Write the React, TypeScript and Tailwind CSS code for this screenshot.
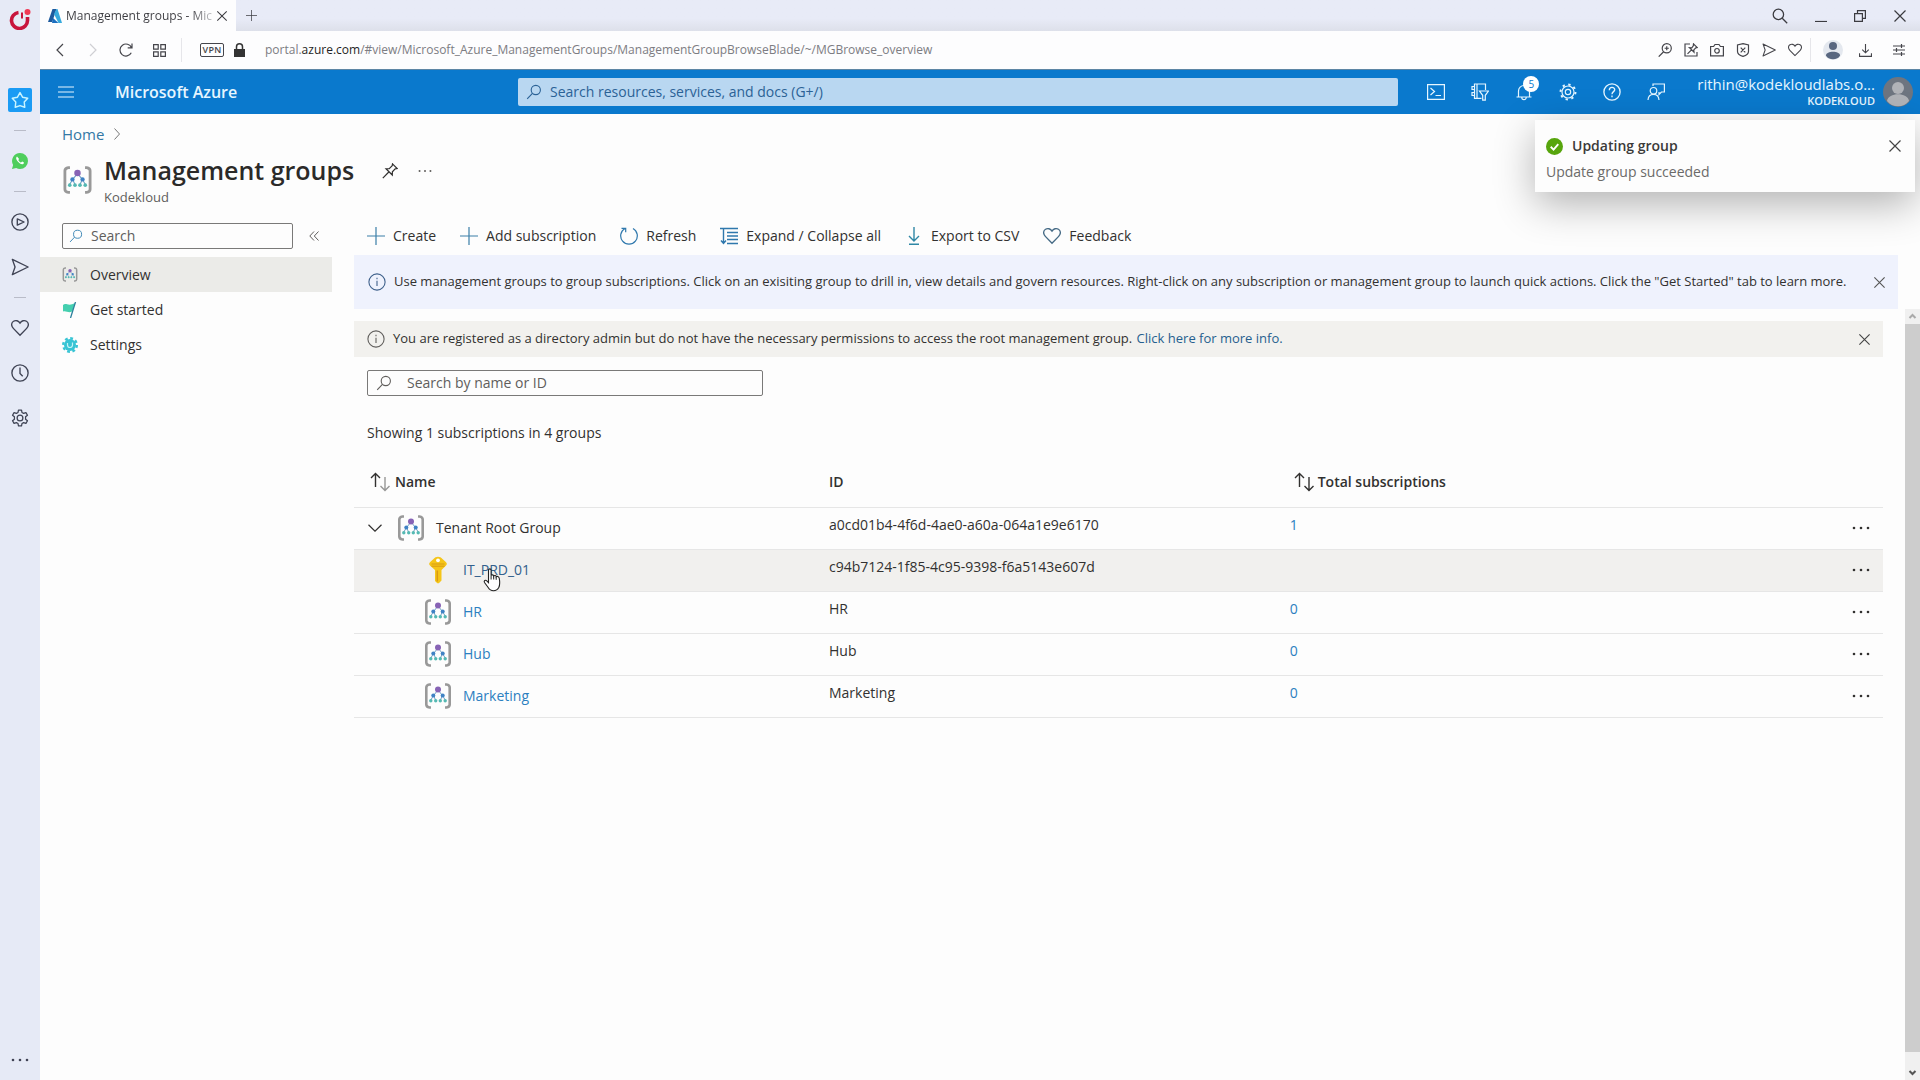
import React from 'react';
import clsx from 'clsx';

interface IconProps {
    className?: string;
}

interface GroupRow {
    name: string;
    id: string;
    total?: number;
    kind: 'root' | 'subscription' | 'group';
}

const rows: GroupRow[] = [
    { name: 'Tenant Root Group', id: 'a0cd01b4-4f6d-4ae0-a60a-064a1e9e6170', total: 1, kind: 'root' },
    { name: 'IT_PRD_01', id: 'c94b7124-1f85-4c95-9398-f6a5143e607d', kind: 'subscription' },
    { name: 'HR', id: 'HR', total: 0, kind: 'group' },
    { name: 'Hub', id: 'Hub', total: 0, kind: 'group' },
    { name: 'Marketing', id: 'Marketing', total: 0, kind: 'group' },
];

const Line = ({ className, children, box = '0 0 20 20', width = 1.2 }: IconProps & { children: React.ReactNode; box?: string; width?: number }) => (
    <svg viewBox={box} className={clsx('shrink-0', className)} fill="none" stroke="currentColor" strokeWidth={width} aria-hidden="true">
        {children}
    </svg>
);

const Close = ({ className }: IconProps) => (
    <Line className={className} box="0 0 14 14"><path d="M1.5 1.5l11 11M12.5 1.5l-11 11" /></Line>
);

const Search = ({ className }: IconProps) => (
    <Line className={className} box="0 0 16 16" width={1.1}><circle cx="9.8" cy="6" r="4.6" /><path d="M6.4 9.3L1.2 14.8" /></Line>
);

const Plus = ({ className }: IconProps) => (
    <Line className={className} box="0 0 18 18"><path d="M9 0v18M0 9h18" /></Line>
);

const Heart = ({ className }: IconProps) => (
    <Line className={className} width={1.5}><path d="M10 18L2.600 10.400C-.2 7.400.3 4 2.800 2.500c2.400-1.500 5.600-.6 7.200 2 1.600-2.600 4.800-3.500 7.200-2 2.500 1.500 3 4.900.2 7.900z" /></Line>
);

const Send = ({ className }: IconProps) => (
    <Line className={className} width={1.5}><path d="M1.500 1.500L19 10 1.500 18.500 4.500 10z" strokeLinejoin="round" /></Line>
);

const Info = ({ className }: IconProps) => (
    <Line className={className}><circle cx="10" cy="10" r="9" /><path d="M10 8.500v6M10 5.200v1.700" /></Line>
);

const Gear = ({ className }: IconProps) => (
    <Line className={className} width={1.4}>
        <circle cx="10" cy="10" r="3.200" />
        <path strokeLinejoin="round" d="M8.300 1.200h3.400l.5 2.700 1.800 1.000 2.600-.9 1.700 2.900-2.100 1.800v2.600l2.100 1.800-1.700 2.900-2.600-.9-1.800 1-.5 2.700H8.300l-.5-2.700-1.800-1-2.600.9-1.700-2.900 2.100-1.800V8.700L1.700 6.900 3.400 4l2.600.9 1.800-1z" />
    </Line>
);

// portal settings gear, with narrow teeth
const CogIcon = ({ className }: IconProps) => (
    <Line className={className} width={1.3}>
        <circle cx="10" cy="10" r="3" />
        <circle cx="10" cy="10" r="6.700" />
        <circle cx="10" cy="10" r="8.300" strokeWidth="2.200" strokeDasharray="2.600 3.919" />
    </Line>
);

const Dots = ({ className }: IconProps) => (
    <svg viewBox="0 0 18 4" className={className} fill="currentColor" aria-hidden="true">
        <circle cx="2" cy="2" r="1.300" /><circle cx="9" cy="2" r="1.300" /><circle cx="16" cy="2" r="1.300" />
    </svg>
);

const GroupIcon = ({ className }: IconProps) => (
    <svg viewBox="0 0 28 26" className={clsx('shrink-0', className)} fill="none" aria-hidden="true">
        <path d="M7 1.500H5.500Q2.300 2 2.300 4.500v17Q2.300 24 5.500 24.500H7M21 1.500h1.500q3.200.5 3.200 3v17q0 2.500-3.200 3H21" stroke="#999" strokeWidth="2.600" />
        <path d="M14 7L9.500 12.500M14 7l4.500 5.500M9.500 12.500l-3 5M9.500 12.500l2.300 5M18.500 12.500l-2.300 5M18.500 12.500l3 5" stroke="#6f9fc4" strokeWidth="1" />
        <circle cx="14" cy="6.500" r="3" fill="#8763b5" />
        <circle cx="9.300" cy="12.500" r="2" fill="#3f82c4" />
        <circle cx="18.700" cy="12.500" r="2" fill="#3f82c4" />
        <g fill="#55b9b3">
            <circle cx="6.800" cy="17.800" r="1.700" /><circle cx="11.700" cy="17.800" r="1.700" />
            <circle cx="16.300" cy="17.800" r="1.700" /><circle cx="21.200" cy="17.800" r="1.700" />
        </g>
    </svg>
);

const KeyIcon = () => (
    <svg viewBox="0 0 20 28" className="h-7 w-5 shrink-0" aria-hidden="true">
        <path d="M10 .8c2 0 3 .9 4.500 2.200l3.300 3c1.400 1.300 1.400 2.500 0 3.800L13.500 14v10.500L10.800 27.300H9.300L7 25V14L2.200 9.800C.8 8.500.8 7.300 2.200 6l3.300-3C7 1.700 8 .8 10 .8z" fill="#f5c518" />
        <path d="M3.500 8h13M3.500 10.200h13" stroke="#d99a12" strokeWidth="1" />
        <path d="M9.300 14.500v11" stroke="#d99a12" strokeWidth="1.500" />
        <circle cx="10" cy="4.300" r="1.900" fill="#fff" />
    </svg>
);

const SortIcon = ({ dim }: { dim?: boolean }) => (
    <svg viewBox="0 0 20 20" className="h-5 w-5 shrink-0" fill="none" stroke="#323130" strokeWidth="1.400" aria-hidden="true">
        <path d="M5.500 15V1.500M1 6l4.500-4.500L10 6" />
        <path d="M15 5v13.500M10.500 14l4.500 4.500 4.500-4.500" opacity={dim ? 0.5 : 1} />
    </svg>
);

const HandCursor = () => (
    <svg viewBox="0 0 18 24" className="pointer-events-none absolute top-2 left-5 h-6 w-[18px]" aria-hidden="true">
        <path d="M5.500 2.200c0-1.800 2.600-1.800 2.600 0v5.300c.5-1 2.500-.8 2.600.6.600-1 2.400-.7 2.500.7.700-.8 2.600-.6 3 1.200.7 3.600.9 6.500-.3 9.300-1.400 2.600-3.200 3.500-5.400 3.500-3 0-4.300-1.500-5.500-3.500L1.500 14.500c-1-1.700.9-3 2.300-1.600l1.700 1.800z" fill="#fff" stroke="#222" strokeWidth="1.100" />
        <path d="M8.100 7.500v4M10.700 8.500v3M13.200 9.200v2.600" stroke="#222" strokeWidth="1" />
    </svg>
);

const SideRail = () => (
    <aside className="flex w-10 shrink-0 flex-col items-center bg-[#e6eaf6] text-[#3f4354]">
        <svg viewBox="0 0 22 22" className="mt-2 h-[22px] w-[22px]" fill="none" aria-hidden="true">
            <path d="M9.500 4.500A8 8 0 1 0 18.500 12.500V9" stroke="#c8143c" strokeWidth="3.600" />
            <path d="M13 4.500v6" stroke="#c8143c" strokeWidth="2" />
            <circle cx="18.500" cy="4" r="3" fill="#f03a55" />
        </svg>
        <button aria-label="Start page" className="mt-[58px] flex h-6 w-6 items-center justify-center rounded-xs bg-[#1a9bf4] text-[#c9f4ff]">
            <Line className="h-[18px] w-[18px]" width={1.6}><path strokeLinejoin="round" d="M10 1.800l2.800 5.100 5.800 1.100-3.900 4.300.6 5.800-5.300-1.900-5.300 1.900.6-5.800L1.400 8l5.800-1.100z" /></Line>
        </button>
        <hr className="mt-[18px] w-3 border-[#b9bcc8]" />
        <button aria-label="WhatsApp" className="mt-[22px] h-4 w-4">
            <svg viewBox="0 0 16 16" aria-hidden="true">
                <path d="M8 0a8 8 0 0 1 0 16c-1.400 0-2.700-.3-3.800-1L0 16l1.100-4A8 8 0 0 1 8 0z" fill="#4fce5d" />
                <path d="M5 3.600c-1.400 1-1 3 .8 5s3.900 3.200 5.300 2.400c1.200-.7.900-1.400.5-1.700l-1.400-.7-1.200.9C7.800 9.200 6.700 8 6.300 6.900l.8-1z" fill="#fff" />
            </svg>
        </button>
        <hr className="mt-[22px] w-3 border-[#b9bcc8]" />
        <button aria-label="Player" className="mt-[21px]">
            <Line className="h-[18px] w-[18px]" width={1.500}><circle cx="10" cy="10" r="9" /><path strokeLinejoin="round" d="M7 6.500l7.500 3.500L7 13.500z" /></Line>
        </button>
        <button aria-label="My Flow" className="mt-[27px]"><Send className="h-[18px] w-[18px]" /></button>
        <hr className="mt-[21px] w-3 border-[#b9bcc8]" />
        <button aria-label="Bookmarks" className="mt-[21px]"><Heart className="h-[18px] w-[18px]" /></button>
        <button aria-label="History" className="mt-[27px]">
            <Line className="h-[18px] w-[18px]" width={1.500}><circle cx="10" cy="10" r="9" /><path d="M10 4v6.500l3 3" /></Line>
        </button>
        <button aria-label="Settings" className="mt-[27px]"><Gear className="h-[18px] w-[18px]" /></button>
        <button aria-label="More" className="mt-auto mb-[18px]"><Dots className="h-[4px] w-[18px]" /></button>
    </aside>
);

const TabStrip = () => (
    <div className="flex h-[31px] items-stretch bg-linear-to-b from-[#e8ebf7] from-60% to-[#dde0ea] text-[#3b3b40]">
        <div className="flex w-[196px] items-center bg-[#fdfdfe] pl-2">
            <svg viewBox="0 0 14 14" className="h-[14px] w-[14px]" aria-hidden="true">
                <path d="M4.500 0h4L4.200 13H0z" fill="#1d5a9e" />
                <path d="M5 9l5.500 5L4 14z" fill="#1c6fc0" />
                <path d="M8.500 0h1L14 14h-3.500L6 5z" fill="#36a9dc" />
            </svg>
            <span className="ml-1 w-[146px] bg-linear-to-r from-[#3b3b40] from-85% to-[#c9c9cc] bg-clip-text text-xs leading-5 whitespace-nowrap text-transparent">
                Management groups - Mic
            </span>
            <button aria-label="Close tab" className="ml-1"><Close className="h-3 w-3" /></button>
        </div>
        <button aria-label="New tab" className="ml-[10px] text-[#3b3b40]"><Plus className="h-[11px] w-[11px]" /></button>
        <div className="ml-auto flex items-center gap-[27px] pr-[13px]">
            <button aria-label="Search tabs">
                <Line className="h-4 w-4" width={1.600}><circle cx="8" cy="8" r="6.500" /><path d="M12.800 12.800L19 19" /></Line>
            </button>
            <button aria-label="Minimize"><Line className="h-3 w-3" box="0 0 12 12"><path d="M0 11.500h12" /></Line></button>
            <button aria-label="Restore"><Line className="h-3 w-3" box="0 0 12 12"><path d="M.6 3.600h7.800v7.800H.6zM3.500 3.500V.6h7.900v7.800H8.500" /></Line></button>
            <button aria-label="Close window"><Close className="h-[14px] w-[14px]" /></button>
        </div>
    </div>
);

const AddressBar = () => (
    <div className="flex h-[39px] items-center border-b border-[#5d86a5] bg-[#fdfdfe] pr-[15px] pl-4 text-[#45454b]">
        <button aria-label="Back"><Line className="h-[14px] w-2" box="0 0 8 14"><path d="M7 1L1 7l6 6" /></Line></button>
        <button aria-label="Forward" className="ml-[25px] text-[#cfcfd4]"><Line className="h-[14px] w-2" box="0 0 8 14"><path d="M1 1l6 6-6 6" /></Line></button>
        <button aria-label="Reload" className="ml-[22px]">
            <Line className="h-[14px] w-[14px]" box="0 0 14 14"><path d="M12.300 9.800A6 6 0 1 1 12.500 4.700M13 .5v4.300H8.700" /></Line>
        </button>
        <button aria-label="Speed dial" className="ml-5">
            <Line className="h-[13px] w-[13px]" box="0 0 13 13"><path d="M.6.6h4.600v4.600H.6zM7.800.6h4.600v4.600H7.800zM.6 7.800h4.600v4.600H.6zM7.800 7.800h4.600v4.600H7.800z" /></Line>
        </button>
        <span className="ml-[15px] h-6 w-px bg-[#e6e6ea]" />
        <button className="ml-[18px] h-[14px] w-6 rounded-xs border border-[#45454b] text-[9px] leading-3 font-semibold tracking-wide">VPN</button>
        <svg viewBox="0 0 11 14" className="ml-[10px] h-[14px] w-[11px]" aria-hidden="true">
            <path d="M0 6h11v8H0z" fill="#333" /><path d="M2.500 6V3.800a3 3 0 0 1 6 0V6" fill="none" stroke="#333" strokeWidth="1.500" />
        </svg>
        <div className="ml-5 flex-1 text-xs leading-5 text-[#7c7c82]">
            portal.<span className="text-[#1f1f24]">azure.com</span>/#view/Microsoft_Azure_ManagementGroups/ManagementGroupBrowseBlade/~/MGBrowse_overview
        </div>
        <div className="flex items-center gap-3">
            <button aria-label="Zoom">
                <Line className="h-[14px] w-[14px]" width={1.700}><circle cx="12.500" cy="7.500" r="6.500" /><path d="M8 12.500L1 19.500M9.500 7.500h6M12.500 4.500v6" /></Line>
            </button>
            <button aria-label="Pin page">
                <Line className="h-[14px] w-[14px]" box="0 0 14 14"><path d="M6 1H1v12h12V9M9.500.8l3.800 3.800-1.500.3-2 2 .2 2.300L5.500 4.700l2.300.2 1.500-2zM7.500 6.800L3.500 10.800" /></Line>
            </button>
            <button aria-label="Snapshot">
                <Line className="h-[14px] w-[14px]" box="0 0 14 14"><path d="M.6 3.500h3l1.400-2h4l1.400 2h3v9.300H.6z" /><circle cx="7" cy="7.800" r="2.300" /></Line>
            </button>
            <button aria-label="Ad blocker">
                <Line className="h-[14px] w-[14px]" box="0 0 14 14"><path d="M7 .7l5.500 1.300v6.500c0 2.300-2.500 4-5.500 4.900-3-.9-5.500-2.600-5.500-4.900V2zM4.700 4.700l4.600 4.600M9.300 4.700L4.700 9.300" /></Line>
            </button>
            <button aria-label="Send page"><Send className="h-[14px] w-[14px]" /></button>
            <button aria-label="Add bookmark"><Heart className="h-[14px] w-[14px]" /></button>
        </div>
        <span className="ml-2 h-6 w-px bg-[#e6e6ea]" />
        <button aria-label="Profile" className="ml-3">
            <svg viewBox="0 0 20 20" className="h-5 w-5" aria-hidden="true">
                <circle cx="10" cy="10" r="10" fill="#e4e8ef" /><circle cx="10" cy="6" r="4" fill="#596780" />
                <path d="M3 15.500c0-5 14-5 14 0-2 5-12 5-14 0z" fill="#596780" />
            </svg>
        </button>
        <button aria-label="Downloads" className="ml-4">
            <Line className="h-[13px] w-[13px]" box="0 0 14 14"><path d="M7 0v9.500M3.500 6L7 9.500 10.500 6M.6 10v3.300h12.800V10" /></Line>
        </button>
        <button aria-label="Easy setup" className="ml-[21px]">
            <Line className="h-3 w-3" box="0 0 12 12"><path d="M0 2h12M0 6h12M0 10h12M8.500 0v4M3.500 4v4M8.500 8v4" /></Line>
        </button>
    </div>
);

const AzureBar = () => (
    <header className="flex h-11 items-center bg-[#0a79cd] text-[#e6f6ff]">
        <button aria-label="Show portal menu" className="ml-[18px]">
            <Line className="h-3 w-4" box="0 0 16 12"><path d="M0 1h16M0 6h16M0 11h16" /></Line>
        </button>
        <a href="#home" className="ml-[41px] w-[240px] text-base leading-6 font-semibold">Microsoft Azure</a>
        <label className="ml-[163px] flex h-7 flex-1 items-center gap-2 rounded-xs bg-[#b9d7f1] pl-2 text-[#2b6296]">
            <Search className="h-4 w-4" />
            <input aria-label="Search resources" placeholder="Search resources, services, and docs (G+/)" className="w-full bg-transparent text-sm outline-none placeholder:text-[#2b6296]" />
        </label>
        <div className="ml-[29px] flex items-center gap-[26px]">
            <button aria-label="Cloud Shell">
                <Line className="h-[18px] w-[18px]" box="0 0 18 18"><path d="M.6 1.600h16.800v14.800H.6zM3.500 5l4 3.500-4 3.500M8.500 12.500H14" /></Line>
            </button>
            <button aria-label="Directories and subscriptions">
                <Line className="h-[18px] w-[18px]" box="0 0 18 18"><path d="M10.500 15.400h-7V1h11v6M6 1v14.400M3.500 3.500H1v3h2.500M3.500 9.500H1v3h2.500M8.500 8h9l-3.200 4.300v4.900h-2.600v-4.900z" /></Line>
            </button>
            <button aria-label="Notifications" className="relative">
                <Line className="h-[18px] w-[18px]" box="0 0 18 18"><path d="M3.500 13.500V8a5.500 5.500 0 0 1 11 0v5.500M1.500 14h15M6.800 14.500a2.200 2.200 0 0 0 4.400 0" /></Line>
                <span className="absolute -top-[7px] left-2 h-4 w-4 rounded-full bg-white text-center text-[10px] leading-4 text-[#0a79cd]">5</span>
            </button>
            <button aria-label="Settings"><CogIcon className="h-[18px] w-[18px]" /></button>
            <button aria-label="Help">
                <Line className="h-[18px] w-[18px]" width={1.500}><circle cx="10" cy="10" r="9" /><path d="M7 8c0-4 6-4 6-.5 0 2-3 2.300-3 5M10 14v1.800" /></Line>
            </button>
            <button aria-label="Feedback">
                <Line className="h-[18px] w-[18px]" box="0 0 18 18"><path d="M6 3V1h11.400v8h-3l-2.400 2.500V9" /><circle cx="6.500" cy="7.800" r="3.300" /><path d="M1 17c.5-7.500 10.500-7.500 11 0" /></Line>
            </button>
        </div>
        <div className="ml-8 text-right">
            <div className="text-[15px] leading-[18px]">rithin@kodekloudlabs.o...</div>
            <div className="text-[11px] leading-4 font-semibold">KODEKLOUD</div>
        </div>
        <svg viewBox="0 0 30 30" className="mr-[7px] ml-2 h-[30px] w-[30px] shrink-0" aria-hidden="true">
            <circle cx="15" cy="15" r="15" fill="#6e7580" /><circle cx="15" cy="11" r="6" fill="#b1b3b8" />
            <path d="M4 24c1-9 21-9 22 0-5 7-17 7-22 0z" fill="#b1b3b8" />
        </svg>
    </header>
);

const Toast = () => (
    <div role="status" className="absolute top-[6px] right-[5px] z-10 h-[72px] w-[380px] bg-[#fdfdfd] px-[11px] pt-[15px] shadow-[0_12px_40px_rgba(0,0,0,0.3)]">
        <div className="flex items-center gap-[9px]">
            <svg viewBox="0 0 18 18" className="h-[17px] w-[17px]" aria-hidden="true">
                <circle cx="9" cy="9" r="9" fill="#57a50d" /><path d="M5 9.300l3 3L13 6.500" fill="none" stroke="#fff" strokeWidth="2" />
            </svg>
            <h2 className="text-sm leading-[22px] font-semibold text-[#3b3a39]">Updating group</h2>
            <button aria-label="Dismiss" className="mr-[2px] ml-auto text-[#444]"><Close className="h-[14px] w-[14px]" /></button>
        </div>
        <p className="mt-1 text-sm leading-[22px] text-[#6b6a69]">Update group succeeded</p>
    </div>
);

const SideMenu = () => (
    <nav className="w-[292px] shrink-0 text-sm text-[#323130]">
        <div className="flex h-[26px] items-center pl-[22px]">
            <label className="flex h-[26px] w-[231px] items-center gap-2 rounded-xs border border-[#7a7978] pl-[6px] text-[#3b86b5]">
                <Search className="h-[14px] w-[14px]" />
                <input aria-label="Search menu" placeholder="Search" className="w-full bg-transparent outline-none placeholder:text-[#605e5c]" />
            </label>
            <button aria-label="Collapse menu" className="ml-4 text-[#605e5c]">
                <Line className="h-[10px] w-[10px]" box="0 0 10 10" width={1}><path d="M5 .5L.8 5 5 9.500M9.500.5L5.300 5l4.200 4.500" /></Line>
            </button>
        </div>
        <a href="#overview" className="mt-2 flex h-[35px] items-center gap-3 bg-[#ebebe8] pl-[22px]"><GroupIcon className="h-[15px] w-4" />Overview</a>
        <a href="#start" className="flex h-[35px] items-center gap-3 pl-[22px]">
            <svg viewBox="0 0 16 16" className="h-4 w-4" aria-hidden="true">
                <path d="M1 3c3-3 5 2 12-2l-2.500 8C7 12 4 8 1 9.500z" fill="#45cfaf" /><path d="M13.500 0L8.500 16" stroke="#2b7f9c" strokeWidth="1.300" />
            </svg>
            Get started
        </a>
        <a href="#settings" className="flex h-[35px] items-center gap-3 pl-[22px]">
            <svg viewBox="0 0 16 16" className="h-4 w-4" aria-hidden="true">
                <circle cx="8" cy="8" r="6" fill="#38c4d4" />
                <circle cx="8" cy="8" r="6.800" fill="none" stroke="#38c4d4" strokeWidth="2.400" strokeDasharray="2.800 2.541" />
                <path d="M5.500 6v2a2.500 2.500 0 0 0 5 0V5.500" fill="none" stroke="#c4f3f5" strokeWidth="1.200" />
            </svg>
            Settings
        </a>
    </nav>
);

const Toolbar = () => (
    <div className="flex h-[26px] items-center gap-6 pl-[13px] text-sm leading-5 text-[#323130]">
        <button className="flex items-center gap-2"><Plus className="h-[18px] w-[18px] text-[#3b7fa8]" />Create</button>
        <button className="flex items-center gap-2"><Plus className="h-[18px] w-[18px] text-[#3b7fa8]" />Add subscription</button>
        <button className="flex items-center gap-2">
            <Line className="h-[18px] w-[18px] text-[#2f78ad]" box="0 0 18 18"><path d="M5 1.500a8.300 8.300 0 1 0 8 0M1.500 1.300h4.200v4" /></Line>
            Refresh
        </button>
        <button className="flex items-center gap-2">
            <Line className="h-[18px] w-[18px] text-[#2f78ad]" box="0 0 18 18" width={1.400}><path d="M0 1.500h18M7 5.500h11M7 9h11M7 12.500h11M7 16.500h11M3.500 1.500v15M1 13.500l2.500 3 2.500-3" /></Line>
            Expand / Collapse all
        </button>
        <button className="flex items-center gap-2">
            <Line className="h-[18px] w-[18px] text-[#2f87a5]" box="0 0 18 18" width={1.400}><path d="M9 0v14M4 9l5 5 5-5M4 17.300h10" /></Line>
            Export to CSV
        </button>
        <button className="flex items-center gap-2"><Heart className="h-[18px] w-[18px] text-[#456a85]" />Feedback</button>
    </div>
);

const GroupTable = () => (
    <table className="mt-[14px] w-full table-fixed border-collapse text-sm text-[#323130]">
        <thead>
            <tr className="h-[49px] border-b border-[#e6e6e6] text-left">
                <th className="w-[31%] pl-4 font-semibold"><span className="flex items-center gap-[5px]"><SortIcon dim />Name</span></th>
                <th className="w-[30%] pl-px font-semibold">ID</th>
                <th className="pl-[7px] font-semibold"><span className="flex items-center gap-1"><SortIcon />Total subscriptions</span></th>
                <th className="w-20" aria-label="Actions" />
            </tr>
        </thead>
        <tbody>
            {rows.map((row) => (
                <tr key={row.name} className={clsx('h-[42px] border-b border-[#e6e6e6]', row.kind === 'subscription' && 'bg-[#f1f0ee]')}>
                    <td>
                        <div className={clsx('flex items-center gap-[11px]', row.kind === 'root' ? 'pl-[14px]' : 'pl-[70px]')}>
                            {row.kind === 'root' && (
                                <button aria-label="Collapse" className="pr-1"><Line className="h-2 w-[14px]" box="0 0 14 8"><path d="M.5.800l6.500 6.400L13.500.800" /></Line></button>
                            )}
                            {row.kind === 'subscription'
                                ? <span className="flex w-7 justify-center"><KeyIcon /></span>
                                : <GroupIcon className="h-[26px] w-7" />}
                            {row.kind === 'root'
                                ? <span>{row.name}</span>
                                : (
                                    <a href={`#${row.name}`} className={clsx('relative', row.kind === 'subscription' ? 'text-[#33608c]' : 'text-[#2c7fc0]')}>
                                        {row.name}
                                        {row.kind === 'subscription' && <HandCursor />}
                                    </a>
                                )}
                        </div>
                    </td>
                    <td className="pb-[6px] pl-px">{row.id}</td>
                    <td className="pb-[6px] pl-[3px]">{row.total !== undefined && <a href="#subscriptions" className="text-[#2c7fc0]">{row.total}</a>}</td>
                    <td className="pr-[13px] pb-[3px] text-right"><button aria-label={`Actions for ${row.name}`} className="align-middle"><Dots className="h-1 w-[18px]" /></button></td>
                </tr>
            ))}
        </tbody>
    </table>
);

const App = () => {
    return (
        <div className="flex min-h-screen bg-[#fdfdfd] font-['Open_Sans','Noto_Sans',sans-serif]">
            <SideRail />
            <div className="flex min-w-0 flex-1 flex-col">
                <TabStrip />
                <AddressBar />
                <AzureBar />
                <main className="relative flex flex-1 flex-col">
                    <Toast />
                    <div className="flex h-10 items-center gap-[10px] pl-[22px] text-[15px] text-[#3478a5]">
                        <a href="#home">Home</a>
                        <Line className="h-3 w-[6px] text-[#777]" box="0 0 6 12" width={1}><path d="M.5.500L5.500 6l-5 5.500" /></Line>
                    </div>
                    <div className="flex h-[69px] pl-[22px]">
                        <GroupIcon className="mt-3 h-7 w-[31px]" />
                        <div className="ml-[11px]">
                            <h1 className="text-[25px] leading-8 font-semibold text-[#2b2a29]">Management groups</h1>
                            <p className="text-[13px] leading-[22px] text-[#605e5c]">Kodekloud</p>
                        </div>
                        <button aria-label="Pin" className="ml-7 h-[34px] text-[#323130]">
                            <Line className="h-4 w-4" box="0 0 16 16"><path d="M10.500.8l4.700 4.700-2 .3-2.800 3-.1 3.200L4 5.700l3.200-.1 3-2.800zM6.800 9L.8 15.200" /></Line>
                        </button>
                        <button aria-label="More options" className="ml-5 h-[34px] text-[#605e5c]"><Dots className="h-1 w-[14px]" /></button>
                    </div>
                    <div className="flex flex-1">
                        <SideMenu />
                        <div className="ml-[22px] flex min-w-0 flex-1 flex-col">
                            <Toolbar />
                            <div className="mt-[6px] mr-[22px] flex h-[54px] items-center gap-2 bg-[#eff2fd] pr-3 pl-[14px] text-[13px] text-[#323130]">
                                <Info className="h-[18px] w-[18px] text-[#3d5f8a]" />
                                <p className="flex-1">Use management groups to group subscriptions. Click on an exisiting group to drill in, view details and govern resources. Right-click on any subscription or management group to launch quick actions. Click the "Get Started" tab to learn more.</p>
                                <button aria-label="Dismiss" className="text-[#555]"><Close className="h-[13px] w-[13px]" /></button>
                            </div>
                            <div className="flex flex-1">
                                <section className="min-w-0 flex-1 pt-3 pr-[22px]">
                                    <div className="flex h-9 items-center gap-2 bg-[#f2f1ee] pr-3 pl-[13px] text-[13px] text-[#323130]">
                                        <Info className="h-[18px] w-[18px] text-[#605e5c]" />
                                        <p className="flex-1">
                                            You are registered as a directory admin but do not have the necessary permissions to access the root management group.{' '}
                                            <a href="#info" className="ml-px text-[#265f8f]">Click here for more info.</a>
                                        </p>
                                        <button aria-label="Dismiss" className="text-[#444]"><Close className="h-[13px] w-[13px]" /></button>
                                    </div>
                                    <label className="mt-[13px] ml-[13px] flex h-[26px] w-[396px] items-center gap-[15px] rounded-xs border border-[#7a7978] pl-2 text-sm text-[#605e5c]">
                                        <Search className="h-4 w-4" />
                                        <input aria-label="Search by name or ID" placeholder="Search by name or ID" className="w-full bg-transparent outline-none placeholder:text-[#605e5c]" />
                                    </label>
                                    <p className="mt-[26px] ml-[13px] text-sm leading-[22px] text-[#323130]">Showing 1 subscriptions in 4 groups</p>
                                    <GroupTable />
                                </section>
                                <div className="flex w-[15px] flex-col bg-[#f0f0f0]">
                                    <Line className="h-[15px] w-[15px] text-[#aaa]" box="0 0 15 15" width={2}><path d="M4.500 9l3-3 3 3" /></Line>
                                    <div className="flex-1 bg-[#cdcdcd]" />
                                    <Line className="mt-3 h-4 w-[15px] text-[#555]" box="0 0 15 16" width={2}><path d="M4.500 7l3 3 3-3" /></Line>
                                </div>
                            </div>
                        </div>
                    </div>
                </main>
            </div>
        </div>
    );
};

export default App;
